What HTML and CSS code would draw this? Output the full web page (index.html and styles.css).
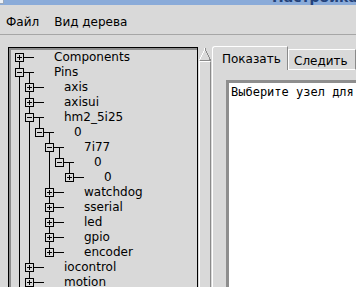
FILE: index.html
```html
<!DOCTYPE html>
<html>
  <head>
    <meta charset="UTF-8">
    <title>HAL</title>
    <link rel="stylesheet" href="styles.css">
  </head>
  <body>
    <div class="titlebar">
      <span class="win-icon"></span>
      <span class="title">Настройка HAL</span>
    </div>
    <div class="menubar">
      <span class="menu-item">Файл</span>
      <span class="menu-item">Вид дерева</span>
    </div>
    <div class="main">
      <div class="tree-panel">
        <svg class="tree-lines" width="188" height="260" viewBox="0 0 188 260" shape-rendering="crispEdges">
          <g transform="translate(-9 -48)" stroke="#000" stroke-width="1" fill="none">
            <!-- вертикальные линии -->
            <path d="M19.5 57V300 M29.5 72V300 M39.5 117V132 M49.5 132V252 M59.5 147V162 M69.5 162V177"/>
            <!-- горизонтальные связи -->
            <path d="M24 57.5H34 M24 72.5H34 M34 87.5H44 M34 102.5H44 M34 117.5H44 M44 132.5H54 M54 147.5H64 M64 162.5H74 M74 177.5H84 M54 192.5H64 M54 207.5H64 M54 222.5H64 M54 237.5H64 M54 252.5H64 M34 267.5H44 M34 282.5H44"/>
          </g>
          <g transform="translate(-9 -48)" stroke="#000" stroke-width="1" fill="#d9d9d9">
            <rect x="15.5" y="53.5" width="8" height="8"/>
            <rect x="15.5" y="68.5" width="8" height="8"/>
            <rect x="25.5" y="83.5" width="8" height="8"/>
            <rect x="25.5" y="98.5" width="8" height="8"/>
            <rect x="25.5" y="113.5" width="8" height="8"/>
            <rect x="35.5" y="128.5" width="8" height="8"/>
            <rect x="45.5" y="143.5" width="8" height="8"/>
            <rect x="55.5" y="158.5" width="8" height="8"/>
            <rect x="65.5" y="173.5" width="8" height="8"/>
            <rect x="45.5" y="188.5" width="8" height="8"/>
            <rect x="45.5" y="203.5" width="8" height="8"/>
            <rect x="45.5" y="218.5" width="8" height="8"/>
            <rect x="45.5" y="233.5" width="8" height="8"/>
            <rect x="45.5" y="248.5" width="8" height="8"/>
            <rect x="25.5" y="263.5" width="8" height="8"/>
            <rect x="25.5" y="278.5" width="8" height="8"/>
          </g>
          <g transform="translate(-9 -48)" stroke="#000" stroke-width="1" fill="none">
            <!-- минусы -->
            <path d="M17 57.5H22 M17 72.5H22 M27 87.5H32 M27 102.5H32 M27 117.5H32 M37 132.5H42 M47 147.5H52 M57 162.5H62 M67 177.5H72 M47 192.5H52 M47 207.5H52 M47 222.5H52 M47 237.5H52 M47 252.5H52 M27 267.5H32 M27 282.5H32"/>
            <!-- плюсы -->
            <path d="M19.5 55V60 M29.5 85V90 M29.5 100V105 M69.5 175V180 M49.5 190V195 M49.5 205V210 M49.5 220V225 M49.5 235V240 M49.5 250V255 M29.5 265V270 M29.5 280V285"/>
          </g>
        </svg>
        <div class="tree">
          <div class="row l0">Components</div>
          <div class="row l0">Pins</div>
          <div class="row l1">axis</div>
          <div class="row l1">axisui</div>
          <div class="row l1">hm2_5i25</div>
          <div class="row l2">0</div>
          <div class="row l3">7i77</div>
          <div class="row l4">0</div>
          <div class="row l5">0</div>
          <div class="row l3">watchdog</div>
          <div class="row l3">sserial</div>
          <div class="row l3">led</div>
          <div class="row l3">gpio</div>
          <div class="row l3">encoder</div>
          <div class="row l1">iocontrol</div>
          <div class="row l1">motion</div>
        </div>
      </div>
      <div class="scrollbar">
        <svg class="arrow-up" width="12" height="13" viewBox="0 0 12 13" shape-rendering="crispEdges">
          <path d="M0.5 12.5 L6 0.5" stroke="#fff" fill="none"/>
          <path d="M6 0.5 L11.5 12.5 H0.5" stroke="#8a8a8a" fill="none"/>
        </svg>
        <div class="thumb"></div>
      </div>
      <div class="notebook">
        <div class="tabs">
          <div class="tab active">Показать</div>
          <div class="tab">Следить</div>
        </div>
        <div class="pane">
          <div class="output">Выберите узел для</div>
        </div>
      </div>
    </div>
  </body>
</html>
```
FILE: styles.css
```css
* { margin: 0; padding: 0; box-sizing: border-box; }
html, body { height: 287px; overflow: hidden; }
body { background: #d9d9d9; font-family: "DejaVu Sans", sans-serif; font-size: 12px; color: #000; }

.titlebar { height: 5px; background: #8aabd9; position: relative; overflow: hidden; }
.win-icon { position: absolute; left: 0; top: 0; width: 4px; height: 4px; background: #eef1f5; border-right: 1px solid #9aa8bb; border-bottom: 1px solid #9aa8bb; }
.title { position: absolute; left: 272px; top: -11px; font-size: 14px; font-weight: bold; line-height: 16px; color: #23427a; white-space: nowrap; }

.menubar { height: 30px; display: flex; gap: 15px; padding: 10px 0 0 6px; line-height: 14px; border-bottom: 1px solid #a6a6a6; }

.main { display: flex; align-items: flex-start; padding: 11px 0 0 8px; }

.tree-panel { flex: none; position: relative; width: 190px; height: 260px; margin-top: 1px; border-top: 1px solid #000; border-left: 1px solid #000; border-right: 1px solid #000; box-shadow: inset 2px 2px 0 #8c8c8c; overflow: hidden; }
.tree-lines { position: absolute; left: 0; top: 0; }
.tree { position: relative; padding-top: 2px; }
.row { height: 15px; line-height: 15px; white-space: nowrap; }
.l0 { padding-left: 45px; }
.l1 { padding-left: 55px; }
.l2 { padding-left: 65px; }
.l3 { padding-left: 75px; }
.l4 { padding-left: 85px; }
.l5 { padding-left: 95px; }

.scrollbar { flex: none; width: 14px; height: 260px; margin-top: 1px; padding: 1px 1px 0 1px; display: flex; flex-direction: column; }
.arrow-up { display: block; flex: none; }
.thumb { flex: 1; border-left: 1px solid #fff; border-top: 1px solid #fff; border-right: 1px solid #8a8a8a; }

.notebook { flex: 1; min-width: 0; }
.tabs { display: flex; align-items: flex-end; height: 24px; }
.tab { flex: none; width: 68px; height: 21px; line-height: 14px; white-space: nowrap; overflow: hidden; padding: 4px 0 0 5px; border-top: 1px solid #fff; border-left: 1px solid #fff; border-right: 1px solid #8a8a8a; border-bottom: 1px solid #fff; }
.tab.active { width: 76px; height: 24px; padding: 5px 0 0 9px; border-bottom: none; border-top-left-radius: 3px; }
.pane { border-left: 1px solid #fff; padding: 10px 0 0 13px; height: 230px; }
.output { height: 220px; background: #fff; border-top: 3px solid #8e8e8e; border-left: 3px solid #8e8e8e; padding: 2px 0 0 2px; font-family: "DejaVu Sans Mono", monospace; font-size: 12px; line-height: 14px; white-space: pre; overflow: hidden; }
```
